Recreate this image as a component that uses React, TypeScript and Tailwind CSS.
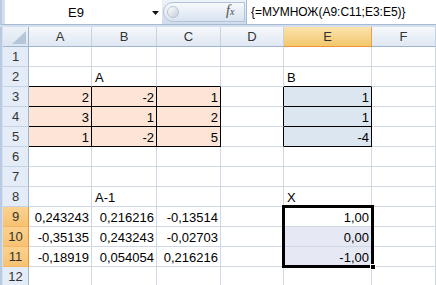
import React from "react";

type Cell = {
  t?: string;
  r?: boolean;
  bg?: "pink" | "blue" | "sel";
  rb?: boolean;
  bb?: boolean;
};

const E: Cell = {};

const rows: Cell[][] = [
  [E, E, E, E, E, E],
  [{ bb: true }, { t: "A", bb: true }, { bb: true }, E, { t: "B", bb: true }, E],
  [
    { t: "2", r: true, bg: "pink", rb: true, bb: true },
    { t: "-2", r: true, bg: "pink", rb: true, bb: true },
    { t: "1", r: true, bg: "pink", rb: true, bb: true },
    { rb: true },
    { t: "1", r: true, bg: "blue", rb: true, bb: true },
    E,
  ],
  [
    { t: "3", r: true, bg: "pink", rb: true, bb: true },
    { t: "1", r: true, bg: "pink", rb: true, bb: true },
    { t: "2", r: true, bg: "pink", rb: true, bb: true },
    { rb: true },
    { t: "1", r: true, bg: "blue", rb: true, bb: true },
    E,
  ],
  [
    { t: "1", r: true, bg: "pink", rb: true, bb: true },
    { t: "-2", r: true, bg: "pink", rb: true, bb: true },
    { t: "5", r: true, bg: "pink", rb: true, bb: true },
    { rb: true },
    { t: "-4", r: true, bg: "blue", rb: true, bb: true },
    E,
  ],
  [E, E, E, E, E, E],
  [E, E, E, E, E, E],
  [E, { t: "A-1" }, E, E, { t: "X" }, E],
  [
    { t: "0,243243", r: true },
    { t: "0,216216", r: true },
    { t: "-0,13514", r: true },
    E,
    { t: "1,00", r: true },
    E,
  ],
  [
    { t: "-0,35135", r: true },
    { t: "0,243243", r: true },
    { t: "-0,02703", r: true },
    E,
    { t: "0,00", r: true, bg: "sel" },
    E,
  ],
  [
    { t: "-0,18919", r: true },
    { t: "0,054054", r: true },
    { t: "0,216216", r: true },
    E,
    { t: "-1,00", r: true, bg: "sel" },
    E,
  ],
  [E, E, E, E, E, E],
];

const colLetters = ["A", "B", "C", "D", "E", "F"];

function bgClass(bg?: Cell["bg"]) {
  if (bg === "pink") return "bg-[#fce4d6]";
  if (bg === "blue") return "bg-[#dce6f1]";
  if (bg === "sel") return "bg-[#e6e9f3]";
  return "bg-white";
}

export default function App() {
  return (
    <div className="relative w-[436px] h-[285px] overflow-hidden bg-[#d5e0ee] font-['Liberation_Sans',Arial,sans-serif] text-[13px] text-black">
      {/* formula bar */}
      <div className="flex h-[25px] border-b border-[#a7bad3] pl-[3px] border-l-[2px] border-l-[#b9cbe2]">
        <div className="relative flex w-[157px] items-center bg-white">
          <span className="w-[142px] text-center text-[13px] leading-none">E9</span>
          <svg className="absolute left-[147px] top-[11px]" width="7" height="4" viewBox="0 0 7 4">
            <path d="M0 0 L7 0 L3.5 4 Z" fill="#111" />
          </svg>
        </div>
        <div className="relative flex w-[84px] items-center bg-gradient-to-b from-[#eef3fa] to-[#cfdcec]">
          <div className="absolute left-[1px] top-[2px] h-[20px] w-[82px] rounded-l-full border border-[#b3c3d8] bg-gradient-to-b from-[#f7f9fc] to-[#d9e3f0]" />
          <div className="absolute left-[5px] top-[6px] h-[12px] w-[12px] rounded-full bg-gradient-to-br from-[#ffffff] to-[#c4cfdc] border border-[#b8c4d3]" />
          <span className="absolute left-[64px] top-[4px] font-['Liberation_Serif',serif] italic text-[14px] text-[#4a4a4a] leading-none">
            f<span className="text-[10px]">x</span>
          </span>
        </div>
        <div className="flex flex-1 items-center border-l border-[#a7bad3] bg-white pl-[4px]">
          <span className="text-[12px] leading-none">{"{=МУМНОЖ(A9:C11;E3:E5)}"}</span>
        </div>
      </div>
      <div className="h-[2px]" />
      {/* grid */}
      <div className="flex border-l-[2px] border-l-[#b9cbe2] pl-[1px]">
        <div className="grid grid-cols-[26px_63px_65px_64px_63px_88px_64px] auto-rows-[20px]">
          {/* corner */}
          <div className="relative border-r border-b border-[#9eb6ce] bg-gradient-to-b from-[#eef3f9] to-[#dce5f1]">
            <svg className="absolute right-[2px] bottom-[2px]" width="14" height="13" viewBox="0 0 14 13">
              <path d="M14 0 L14 13 L0 13 Z" fill="#b6c6da" />
            </svg>
          </div>
          {colLetters.map((c) =>
            c === "E" ? (
              <div
                key={c}
                className="flex items-center justify-center border-r border-b border-r-[#e3a24b] border-b-[#f29436] bg-gradient-to-b from-[#fbe3ad] to-[#f3c76c] text-[#333]"
              >
                {c}
              </div>
            ) : (
              <div
                key={c}
                className="flex items-center justify-center border-r border-b border-r-[#c5d2e3] border-b-[#9eb6ce] bg-gradient-to-b from-[#f6f9fc] to-[#dfe7f2] text-[#333]"
              >
                {c}
              </div>
            )
          )}
          {rows.map((row, ri) => {
            const n = ri + 1;
            const sel = n >= 9 && n <= 11;
            return (
              <React.Fragment key={n}>
                {sel ? (
                  <div className="flex items-center justify-center border-r border-b border-r-[#f29436] border-b-[#f5b764] bg-gradient-to-b from-[#fbd28e] to-[#f7c272] text-[#333]">
                    {n}
                  </div>
                ) : (
                  <div className="flex items-center justify-center border-r border-b border-r-[#9eb6ce] border-b-[#c5d2e3] bg-[#e4ecf7] text-[#333]">
                    {n}
                  </div>
                )}
                {row.map((c, ci) => (
                  <div
                    key={ci}
                    className={
                      "flex items-end overflow-hidden whitespace-nowrap border-r border-b pb-[1px] leading-[14px] " +
                      (c.rb ? "border-r-black " : "border-r-[#d0d7e5] ") +
                      (c.bb ? "border-b-black " : "border-b-[#d0d7e5] ") +
                      (c.r ? "justify-end pr-[2px] " : "justify-start pl-[3px] ") +
                      bgClass(c.bg)
                    }
                  >
                    {c.t}
                  </div>
                ))}
              </React.Fragment>
            );
          })}
        </div>
      </div>
      {/* selection overlay */}
      <div className="pointer-events-none absolute left-[282px] top-[205px] h-[63px] w-[92px] border-[3px] border-black" />
      <div className="pointer-events-none absolute left-[370px] top-[264px] h-[6px] w-[6px] border border-white bg-black" />
    </div>
  );
}
